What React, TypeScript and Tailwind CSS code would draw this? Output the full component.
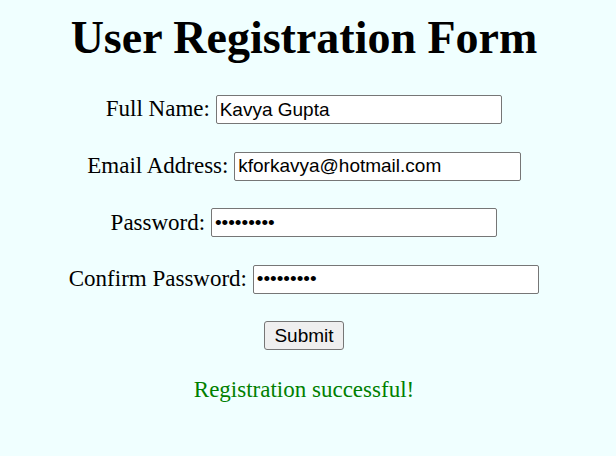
import { useState } from "react";

const FIELDS = [
  { id: "name", label: "Full Name:", type: "text", value: "Kavya Gupta" },
  { id: "email", label: "Email Address:", type: "email", value: "kforkavya@hotmail.com" },
  { id: "password", label: "Password:", type: "password", value: "secret123" },
  { id: "confirm", label: "Confirm Password:", type: "password", value: "secret123" },
];

export default function App() {
  const [values, setValues] = useState<Record<string, string>>(
    Object.fromEntries(FIELDS.map((f) => [f.id, f.value]))
  );

  return (
    <div className="min-h-[456px] w-full bg-[#f0ffff] font-['Liberation_Serif',serif] text-[23px] text-black">
      <div className="flex flex-col items-center pr-[8px] pt-[12px]">
        {/* Header */}
        <h1 className="text-[46px] font-bold leading-[51px]">User Registration Form</h1>

        {/* Fields */}
        <form className="mt-[32px] flex flex-col items-center gap-[27.67px]" onSubmit={(e) => e.preventDefault()}>
          {FIELDS.map((f) => (
            <div key={f.id} className="flex h-[29px] items-center whitespace-pre">
              <label htmlFor={f.id}>{f.label} </label>
              <input
                id={f.id}
                type={f.type}
                value={values[f.id]}
                onChange={(e) => setValues({ ...values, [f.id]: e.target.value })}
                className="h-[29px] w-[286.5px] rounded-[2px] border border-[#767676] bg-white px-[3px] font-['Liberation_Sans',sans-serif] text-[19px] text-black outline-none"
              />
            </div>
          ))}
          <button
            type="submit"
            className="-mt-[1px] h-[29px] w-[80px] rounded-[3px] border border-[#767676] bg-[#efefef] font-['Liberation_Sans',sans-serif] text-[19px] leading-none text-black"
          >
            Submit
          </button>
        </form>

        {/* Status */}
        <p className="mt-[23px] text-[#008000]">Registration successful!</p>
      </div>
    </div>
  );
}
